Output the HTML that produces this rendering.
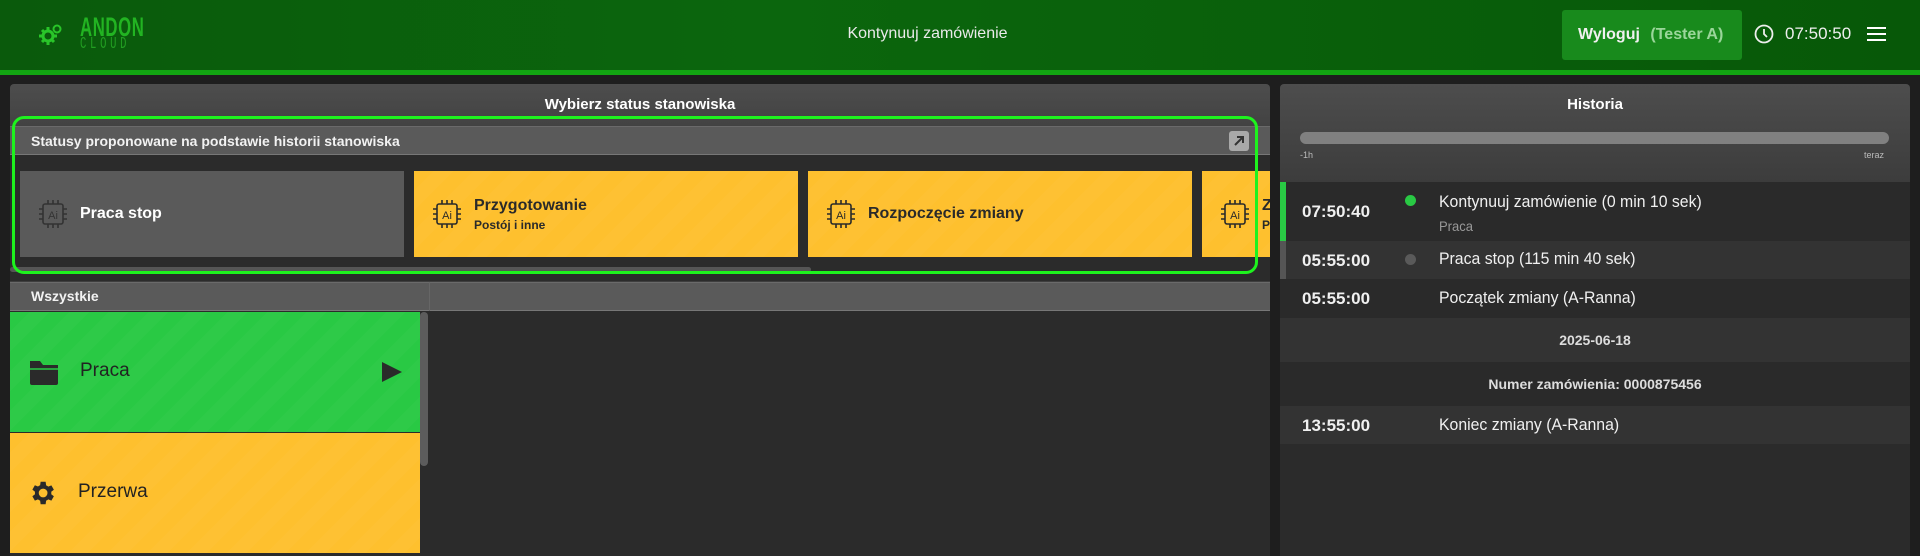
<!DOCTYPE html>
<html><head><meta charset="utf-8"><style>
*{box-sizing:border-box;margin:0;padding:0}
body{width:1920px;height:556px;overflow:hidden;background:#1e1e1e;font-family:"Liberation Sans",sans-serif;position:relative;color:#fff}
.abs{position:absolute}
#hdr{left:0;top:0;width:1920px;height:70px;background:linear-gradient(90deg,#0a5a0c,#0b660d 40%,#075808);}
#hl{left:0;top:70px;width:1920px;height:5px;background:#12a512}
.stripes{background-image:repeating-linear-gradient(135deg,rgba(255,255,255,0) 0 14px,rgba(255,255,255,.025) 14px 28px)}
.card{position:absolute;top:171px;height:86px;display:flex;align-items:center;padding-left:18px;color:#2a2a2a}
.card .t{font-weight:bold;font-size:16px}
.card .s{font-weight:bold;font-size:12px;margin-top:3px}
.ai{width:30px;height:30px;margin-right:12px;flex:none}
.row{position:absolute;left:1280px;width:630px}
.tm{position:absolute;left:22px;font-weight:bold;font-size:17px;color:#f0f0f0}
.tx{position:absolute;left:159px;font-size:17px;color:#f0f0f0;transform:scaleX(.93);transform-origin:left}
</style></head><body>
<div id="hdr" class="abs"></div>
<div id="hl" class="abs"></div>
<svg class="abs" style="left:38px;top:22px" width="26" height="24" viewBox="0 0 26 24"><g fill="none" stroke="#29c529" stroke-width="3"><circle cx="10" cy="14" r="5"/></g><g stroke="#29c529" stroke-width="3"><path d="M10 5v3M10 20v3M1 14h3M16 14h3M4 8l2 2M14 18l2 2M4 20l2-2"/></g><circle cx="19" cy="7" r="3.5" fill="none" stroke="#29c529" stroke-width="2"/></svg>
<div class="abs" style="left:80px;top:12px;font-weight:bold;font-size:27px;color:#22b422;letter-spacing:1px;transform:scaleX(.62);transform-origin:left">ANDON</div>
<div class="abs" style="left:80px;top:35px;font-family:'Liberation Mono',monospace;font-size:17px;color:#22a022;letter-spacing:6px;transform:scaleX(.62);transform-origin:left">CLOUD</div>
<div class="abs" style="left:0;width:1855px;top:25px;text-align:center;font-size:16px;color:#eaeaea">Kontynuuj zamówienie</div>
<div class="abs" style="left:1562px;top:10px;width:180px;height:50px;background:#188a1c;border-radius:3px;font-size:16px;font-weight:bold;line-height:50px;padding-left:16px"><span style="color:#f0f0f0">Wyloguj</span> <span style="color:#9ad69a;margin-left:6px">(Tester A)</span></div>
<svg class="abs" style="left:1754px;top:24px" width="20" height="20" viewBox="0 0 20 20"><circle cx="10" cy="10" r="8.5" fill="none" stroke="#eee" stroke-width="1.8"/><path d="M10 5v5l3 3" fill="none" stroke="#eee" stroke-width="1.8"/></svg>
<div class="abs" style="left:1785px;top:24px;font-size:17px;color:#eee">07:50:50</div>
<div class="abs" style="left:1867px;top:27px;width:19px;height:2px;background:#fff;box-shadow:0 6px 0 #fff,0 12px 0 #fff"></div>

<div class="abs" style="left:10px;top:84px;width:1260px;height:472px;background:linear-gradient(#4d4d4d,#3e3e3e 60px);border-radius:4px 4px 0 0"></div>
<div class="abs" style="left:10px;width:1260px;top:96px;text-align:center;font-weight:bold;font-size:15px;color:#fff">Wybierz status stanowiska</div>
<div class="abs" style="left:10px;top:126px;width:1260px;height:29px;background:#5a5a5a;border-top:1px solid #6a6a6a;border-bottom:1px solid #777"></div>
<div class="abs" style="left:31px;top:133px;font-weight:bold;font-size:14px;color:#f2f2f2">Statusy proponowane na podstawie historii stanowiska</div>
<div class="abs" style="left:1229px;top:131px;width:20px;height:20px;background:#a9a9a9;border-radius:3px"><svg width="20" height="20"><path d="M6 14l8-8M8 6h6v6" fill="none" stroke="#333" stroke-width="2"/></svg></div>
<div class="abs" style="left:10px;top:155px;width:1260px;height:126px;background:#2b2b2b;overflow:hidden"></div>
<div class="card" style="left:20px;width:384px;background-color:#5a5a5a;color:#fff">
<svg class="ai" viewBox="0 0 30 30"><g fill="none" stroke="#333" stroke-width="1.6"><rect x="5" y="5" width="20" height="20" rx="2"/><path d="M10 1v4M15 1v4M20 1v4M10 25v4M15 25v4M20 25v4M1 10h4M1 15h4M1 20h4M25 10h4M25 15h4M25 20h4"/></g><text x="15" y="20" font-size="11" text-anchor="middle" fill="#333" font-family="Liberation Sans">Ai</text></svg>
<div class="t">Praca stop</div></div>
<div class="card stripes" style="left:414px;width:384px;background-color:#fec02e">
<svg class="ai" viewBox="0 0 30 30"><g fill="none" stroke="#2a2a2a" stroke-width="1.6"><rect x="5" y="5" width="20" height="20" rx="2"/><path d="M10 1v4M15 1v4M20 1v4M10 25v4M15 25v4M20 25v4M1 10h4M1 15h4M1 20h4M25 10h4M25 15h4M25 20h4"/></g><text x="15" y="20" font-size="11" text-anchor="middle" fill="#2a2a2a" font-family="Liberation Sans">Ai</text></svg>
<div><div class="t">Przygotowanie</div><div class="s">Postój i inne</div></div></div>
<div class="card stripes" style="left:808px;width:384px;background-color:#fec02e">
<svg class="ai" viewBox="0 0 30 30"><g fill="none" stroke="#2a2a2a" stroke-width="1.6"><rect x="5" y="5" width="20" height="20" rx="2"/><path d="M10 1v4M15 1v4M20 1v4M10 25v4M15 25v4M20 25v4M1 10h4M1 15h4M1 20h4M25 10h4M25 15h4M25 20h4"/></g><text x="15" y="20" font-size="11" text-anchor="middle" fill="#2a2a2a" font-family="Liberation Sans">Ai</text></svg>
<div class="t">Rozpoczęcie zmiany</div></div>
<div class="card stripes" style="left:1202px;width:68px;background-color:#fec02e;overflow:hidden">
<svg class="ai" viewBox="0 0 30 30"><g fill="none" stroke="#2a2a2a" stroke-width="1.6"><rect x="5" y="5" width="20" height="20" rx="2"/><path d="M10 1v4M15 1v4M20 1v4M10 25v4M15 25v4M20 25v4M1 10h4M1 15h4M1 20h4M25 10h4M25 15h4M25 20h4"/></g><text x="15" y="20" font-size="11" text-anchor="middle" fill="#2a2a2a" font-family="Liberation Sans">Ai</text></svg>
<div><div class="t">Zeszyt</div><div class="s">Postój</div></div></div>
<div class="abs" style="left:10px;top:267px;width:801px;height:5px;background:#555;border-radius:3px"></div>
<div class="abs" style="left:12px;top:116px;width:1246px;height:158px;border:3px solid #1ef21e;border-radius:12px"></div>

<div class="abs" style="left:10px;top:282px;width:1260px;height:29px;background:#5a5a5a;border-top:1px solid #6a6a6a;border-bottom:1px solid #777"></div>
<div class="abs" style="left:429px;top:282px;width:1px;height:274px;background:#666"></div>
<div class="abs" style="left:31px;top:288px;font-weight:bold;font-size:14px;color:#f2f2f2">Wszystkie</div>
<div class="abs" style="left:430px;top:311px;width:840px;height:245px;background:#2b2b2b"></div>
<div class="abs" style="left:10px;top:311px;width:420px;height:245px;background:#2b2b2b"></div>
<div class="abs" style="left:420px;top:312px;width:8px;height:154px;background:#5c5c5c;border-radius:4px"></div>
<div class="abs stripes" style="left:10px;top:312px;width:410px;height:120px;background-color:#29c944"></div>
<svg class="abs" style="left:28px;top:358px" width="32" height="28" viewBox="0 0 32 28"><path d="M2 3h10l3 4h15v18a2 2 0 0 1-2 2H4a2 2 0 0 1-2-2z" fill="#2a2a2a"/><path d="M2 11h28" stroke="#29c944" stroke-width="1.5"/></svg>
<div class="abs" style="left:80px;top:360px;font-size:19px;color:#222">Praca</div>
<svg class="abs" style="left:382px;top:362px" width="20" height="20"><path d="M0 0L20 10L0 20z" fill="#2a2a2a"/></svg>
<div class="abs stripes" style="left:10px;top:433px;width:410px;height:120px;background-color:#fec02e"></div>
<svg class="abs" style="left:27px;top:478px" width="30" height="30" viewBox="0 0 24 24"><path fill="#2a2a2a" d="M19.4 13a7.5 7.5 0 0 0 0-2l2.1-1.6-2-3.5-2.5 1a7 7 0 0 0-1.7-1L14.9 3h-4l-.4 2.8a7 7 0 0 0-1.7 1l-2.5-1-2 3.5L6.4 11a7.5 7.5 0 0 0 0 2l-2.1 1.6 2 3.5 2.5-1a7 7 0 0 0 1.7 1l.4 2.9h4l.4-2.9a7 7 0 0 0 1.7-1l2.5 1 2-3.5zM12.9 15.5a3.5 3.5 0 1 1 0-7 3.5 3.5 0 0 1 0 7z"/></svg>
<div class="abs" style="left:78px;top:481px;font-size:19px;color:#222">Przerwa</div>

<div class="abs" style="left:1280px;top:84px;width:630px;height:472px;background:linear-gradient(#4d4d4d,#3c3c3c 100px);border-radius:4px 4px 0 0"></div>
<div class="abs" style="left:1280px;width:630px;top:96px;text-align:center;font-weight:bold;font-size:15px">Historia</div>
<div class="abs" style="left:1300px;top:132px;width:589px;height:12px;background:#808080;border-radius:6px"></div>
<div class="abs" style="left:1300px;top:150px;font-size:9px;color:#bbb">-1h</div>
<div class="abs" style="left:1864px;top:150px;font-size:9px;color:#bbb">teraz</div>
<div class="abs" style="left:1280px;top:182px;width:630px;height:374px;background:#2b2b2b"></div>
<div class="row" style="top:182px;height:59px;background:#2a2a2a;border-left:6px solid #29c944"><div class="tm" style="left:16px;top:20px">07:50:40</div><div style="position:absolute;left:119px;top:13px;width:11px;height:11px;border-radius:50%;background:#29c944"></div><div class="tx" style="left:153px;top:10px">Kontynuuj zamówienie (0 min 10 sek)</div><div class="tx" style="left:153px;top:36px;font-size:14px;color:#999">Praca</div></div>
<div class="row" style="top:241px;height:38px;background:#333;border-left:6px solid #555"><div class="tm" style="left:16px;top:10px">05:55:00</div><div style="position:absolute;left:119px;top:13px;width:11px;height:11px;border-radius:50%;background:#5a5a5a"></div><div class="tx" style="left:153px;top:8px">Praca stop (115 min 40 sek)</div></div>
<div class="row" style="top:279px;height:39px;background:#2a2a2a"><div class="tm" style="top:10px">05:55:00</div><div class="tx" style="top:9px">Początek zmiany (A-Ranna)</div></div>
<div class="row" style="top:318px;height:44px;background:#333;text-align:center;font-weight:bold;font-size:14px;color:#ddd;line-height:44px">2025-06-18</div>
<div class="row" style="top:362px;height:44px;background:#2a2a2a;text-align:center;font-weight:bold;font-size:14px;color:#ddd;line-height:44px">Numer zamówienia: 0000875456</div>
<div class="row" style="top:406px;height:38px;background:#333"><div class="tm" style="top:10px">13:55:00</div><div class="tx" style="top:9px">Koniec zmiany (A-Ranna)</div></div>
</body></html>
